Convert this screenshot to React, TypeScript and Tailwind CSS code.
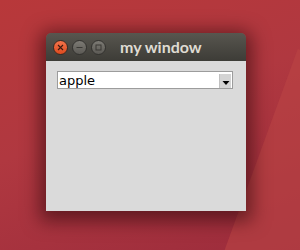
import React from 'react';

const TitleButton = ({ kind }: { kind: 'close' | 'min' | 'max' }) => {
  const isClose = kind === 'close';
  return (
    <div
      className={
        'flex h-[15px] w-[15px] items-center justify-center rounded-full border ' +
        (isClose
          ? 'border-[#3a2a22] bg-gradient-to-b from-[#f3734a] to-[#dd4a1d]'
          : 'border-[#33322f] bg-gradient-to-b from-[#7c7a74] to-[#5c5a55]')
      }
    >
      <svg width="9" height="9" viewBox="0 0 9 9">
        {kind === 'close' && (
          <path d="M2 2 L7 7 M7 2 L2 7" stroke="#3b1a10" strokeWidth="1.1" />
        )}
        {kind === 'min' && <path d="M1.5 4.5 H7.5" stroke="#3a3935" strokeWidth="1.1" />}
        {kind === 'max' && (
          <rect x="2" y="2" width="5" height="5" fill="none" stroke="#3a3935" strokeWidth="1" />
        )}
      </svg>
    </div>
  );
};

export default function App() {
  return (
    <div className="relative h-[250px] w-[300px] overflow-hidden bg-[linear-gradient(160deg,#b8383a_0%,#b03840_45%,#9c2c3c_100%)]">
      <div className="absolute right-[-60px] top-[60px] h-[260px] w-[110px] rotate-[20deg] bg-[#bb4445] opacity-60" />
      <div className="relative pl-[46px] pt-[33px]">
        <div className="w-[200px] overflow-hidden rounded-t-[5px] shadow-[0_4px_18px_6px_rgba(40,5,10,0.55)]">
          {/* title bar */}
          <div className="flex h-[28px] items-center bg-gradient-to-b from-[#58564f] to-[#3d3c37] pl-[7px]">
            <div className="flex gap-[4px]">
              <TitleButton kind="close" />
              <TitleButton kind="min" />
              <TitleButton kind="max" />
            </div>
            <span
              className="ml-[14px] text-[16px] font-bold text-[#dfdbd2]"
              style={{ fontFamily: 'Lato, "Open Sans", sans-serif' }}
            >
              my window
            </span>
          </div>
          {/* body */}
          <div className="h-[150px] bg-[#dadada] pl-[11px] pt-[10px]">
            <div className="flex h-[18px] w-[176px] items-center border border-[#9c9c9c] bg-white">
              <span
                className="flex-1 pl-[1px] text-[13px] leading-none text-black"
                style={{ fontFamily: '"DejaVu Sans", sans-serif' }}
              >
                apple
              </span>
              <div className="mr-[1px] mt-[2px] flex h-[14px] w-[12px] items-center justify-center bg-[#d4d4d4] border-l border-[#c0c0c0]">
                <svg width="8" height="6" viewBox="0 0 8 6" className="mt-[3px]">
                  <path d="M0.5 1 H7.5 L4 5 Z" fill="#000" />
                </svg>
              </div>
            </div>
          </div>
        </div>
      </div>
    </div>
  );
}
